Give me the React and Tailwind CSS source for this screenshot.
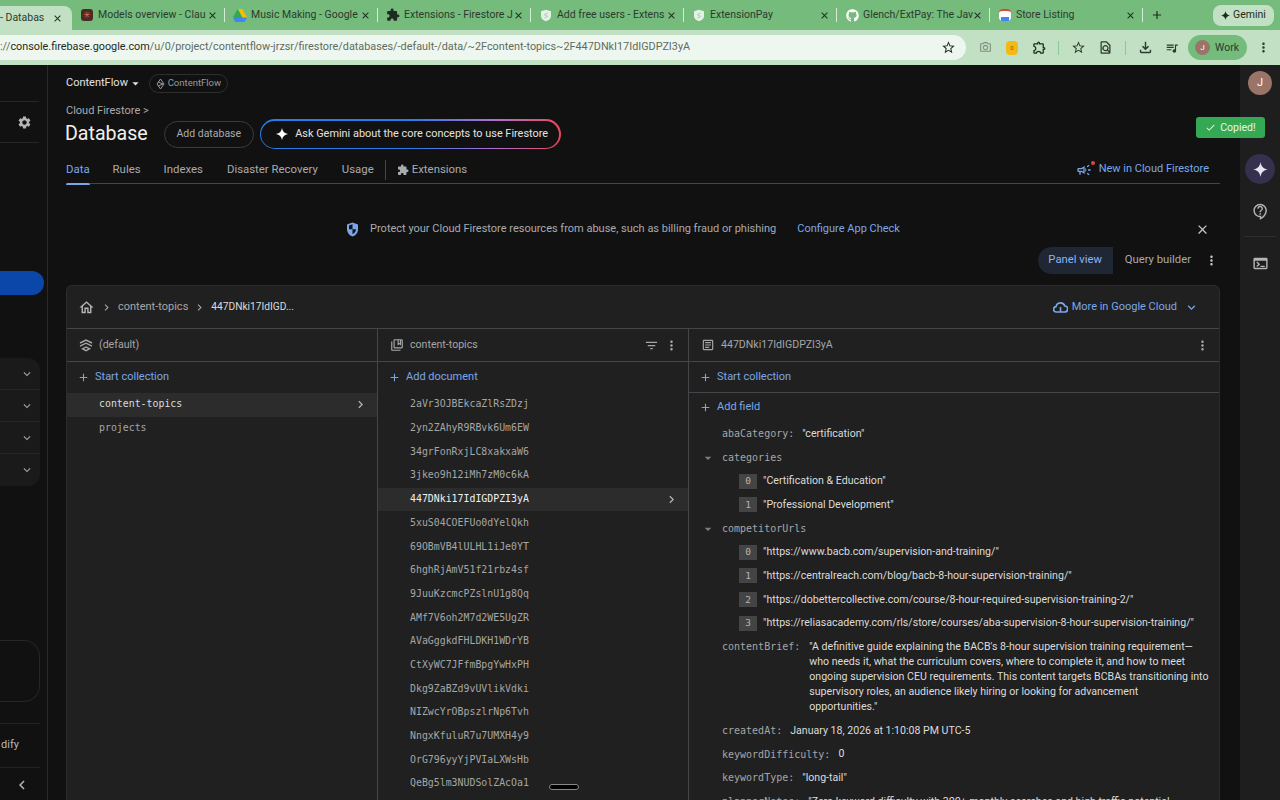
import React from "react";
import {
  MdOutlineHome, MdChevronRight, MdAdd, MdFilterList, MdMoreVert, MdOutlineArticle, MdSettings, MdClose,
  MdExtension, MdOutlineExtension, MdStarBorder, MdOutlineCollectionsBookmark, MdExpandMore, MdChevronLeft, MdCheck,
  MdOutlineFileDownload, MdOutlineCameraAlt, MdOutlineTerminal, MdArrowDropDown, MdOutlineCampaign,
  MdOutlineContactSupport, MdOutlineFindInPage, MdQueueMusic,
} from "react-icons/md";
import { FaGithub } from "react-icons/fa";

const ui = { fontFamily: "Roboto, sans-serif" };
const mono = { fontFamily: "'DejaVu Sans Mono', monospace" };

const Spark = ({ size = 12, className = "" }) => (
  <svg width={size} height={size} viewBox="0 0 24 24" className={className} fill="currentColor">
    <path d="M12 0c1 7 5 11 12 12-7 1-11 5-12 12-1-7-5-11-12-12 7-1 11-5 12-12z" />
  </svg>
);

const DriveIcon = () => (
  <svg width="14" height="13" viewBox="0 0 24 22">
    <path d="M8 0h8l8 14h-8z" fill="#fbbc04" />
    <path d="M8 0l8 14-4 7-12-7z" fill="#34a853" />
    <path d="M0 15h24l-4 7H4z" fill="#4285f4" />
  </svg>
);

const ExtPayIcon = () => (
  <svg width="10" height="13" viewBox="0 0 12 14">
    <path d="M6 0l6 2v6c0 3-3 5-6 6-3-1-6-3-6-6V2z" fill="#e4f1e5" />
    <path d="M8 4L4 6l4 2-4 2" fill="none" stroke="#9cc9a2" strokeWidth="1" />
  </svg>
);

const ShieldIcon = () => (
  <svg width="13" height="15" viewBox="0 0 13 15">
    <path d="M6.5.5l5.5 2v5c0 3.4-2.4 5.8-5.5 7C3.4 13.300 1 10.900 1 7.500v-5z" fill="#7aa7e8" />
    <path d="M6.500 2.300L3 3.600v3.700h3.500zM6.500 7.300V12.300c2-1 3.500-2.700 3.500-5z" fill="#111" />
  </svg>
);

const CloudIcon = () => (
  <svg width="15" height="12" viewBox="0 0 15 12" fill="none" stroke="currentColor" strokeWidth="1.600">
    <path d="M4 11H3.500a2.700 2.700 0 0 1-.4-5.400 4.500 4.500 0 0 1 8.700-.6A3 3 0 0 1 11.500 11z" />
    <path d="M7.500 6v5" />
  </svg>
);

const tabs = [
  { title: "Models overview - Clau", icon: <span className="w-3 h-3 rounded-[3px] bg-[#4a2a22] flex items-center justify-center text-[#e0694a] text-[9px] leading-none">✳</span> },
  { title: "Music Making - Google", icon: <DriveIcon /> },
  { title: "Extensions - Firestore J", icon: <MdExtension size={14} className="text-[#1f2a20]" /> },
  { title: "Add free users - Extens", icon: <ExtPayIcon /> },
  { title: "ExtensionPay", icon: <ExtPayIcon /> },
  { title: "Glench/ExtPay: The Jav", icon: <FaGithub size={13} className="text-white" /> },
  { title: "Store Listing", icon: <span className="w-3 h-3 rounded-sm bg-white border-t-2 border-[#ea4335] flex items-end justify-center"><span className="w-2 h-1 bg-[#4285f4]" /></span> },
];

const Tab = ({ title, icon }) => (
  <div className="w-[153px] h-[30px] shrink-0 flex items-center pl-[8px] relative">
    <span className="w-[14px] flex justify-center shrink-0">{icon}</span>
    <span className="ml-[4px] w-[98px] whitespace-nowrap text-[10.5px] text-[#2c3a2e]">{title}</span>
    <MdClose size={11} className="ml-[11px] text-[#1f2a20]" />
    <span className="absolute left-[152px] top-[8px] w-px h-[14px] bg-[#d6ead8]" />
  </div>
);

const TabStrip = () => (
  <div className="h-[30px] bg-[#74bb7c] flex items-center shrink-0 relative" style={ui}>
    <div className="w-[72px] h-[24px] mt-[6px] rounded-tr-lg bg-[#c2e0c4] flex items-center shrink-0">
      <span className="w-[46px] whitespace-nowrap text-[10.5px] text-[#2c3a2e]">- Databas</span>
      <MdClose size={11} className="ml-[6px] text-[#1f2a20]" />
    </div>
    {tabs.map((t) => <Tab key={t.title} {...t} />)}
    <MdAdd size={14} className="ml-[7px] text-[#1f2a20]" />
    <div className="ml-auto mr-[6px] w-[61px] h-[21px] rounded-lg bg-[#c2e0c4] flex items-center justify-center gap-[3px] text-[10.5px] text-[#1f2a20]">
      <Spark size={9} /> Gemini
    </div>
  </div>
);

const Toolbar = () => (
  <div className="h-[35px] bg-[#c2e0c4] flex items-center shrink-0 text-[#2c3a2e]" style={ui}>
    <div className="w-[966px] h-[25px] rounded-r-full bg-[#eef7ef] flex items-center shrink-0 text-[10.83px] whitespace-nowrap">
      <span className="text-[#5f6b60]">://</span>
      <span className="text-[#1f2a20]">console.firebase.google.com</span>
      <span className="text-[#5f6b60]">/u/0/project/contentflow-jrzsr/firestore/databases/-default-/data/~2Fcontent-topics~2F447DNkI17IdIGDPZI3yA</span>
      <MdStarBorder size={15} className="ml-auto mr-[10px] text-[#1f2a20]" />
    </div>
    <MdOutlineCameraAlt size={13} className="ml-[13px] text-[#7f8f81]" />
    <span className="ml-[14px] w-[12px] h-[14px] rounded-sm bg-[#f5b914] text-[6px] text-[#7a5a00] flex items-center justify-center">0</span>
    <MdOutlineExtension size={15} className="ml-[14px] text-[#1f2a20]" />
    <span className="ml-[11px] w-px h-[14px] bg-[#8fc495]" />
    <MdStarBorder size={15} className="ml-[12px]" />
    <MdOutlineFindInPage size={15} className="ml-[12px]" />
    <span className="ml-[12px] w-px h-[14px] bg-[#8fc495]" />
    <MdOutlineFileDownload size={17} className="ml-[11px]" />
    <MdQueueMusic size={14} className="ml-[11px]" />
    <div className="ml-[9px] w-[59px] h-[25px] rounded-full bg-[#74bb7c] flex items-center pl-[7px] gap-[5px] text-[10.5px]">
      <span className="w-[15px] h-[15px] rounded-full bg-[#9b7468] text-white text-[8px] flex items-center justify-center">J</span>
      Work
    </div>
    <MdMoreVert size={15} className="ml-[9px]" />
  </div>
);

const Sidebar = () => (
  <div className="w-[48px] shrink-0 border-r border-[#2a2a2a] flex flex-col h-full" style={ui}>
    <div className="h-[36px] shrink-0" />
    <div className="w-[39px] h-[42px] border-y border-[#262626] flex items-center justify-end pr-[7px] shrink-0">
      <MdSettings size={15} className="text-[#b5b5b5]" />
    </div>
    <div className="w-[44px] h-[24px] mt-[128px] rounded-r-full bg-[#0b47a8] shrink-0" />
    <div className="w-[40px] mt-[63px] rounded-r-xl bg-[#1a1a1a] shrink-0 divide-y divide-[#262626]">
      {[0, 1, 2, 3].map((i) => (
        <div key={i} className="h-[32px] flex items-center justify-end pr-[6px]">
          <MdExpandMore size={14} className="text-[#a0a0a0]" />
        </div>
      ))}
    </div>
    <div className="w-[40px] h-[62px] mt-[154px] rounded-r-2xl border border-l-0 border-[#262626] shrink-0" />
    <div className="w-[40px] h-[45px] mt-[21px] border-y border-[#222] flex items-center justify-end pr-[21px] text-[11px] text-[#b8b8b8] shrink-0">
      <span>dify</span>
    </div>
    <div className="w-[40px] flex justify-end pr-[9px] mt-[8px] shrink-0">
      <MdChevronLeft size={18} className="text-[#b5b5b5]" />
    </div>
  </div>
);

const PageTabs = () => (
  <div className="h-[30px] mt-[4px] pt-[2px] flex items-center border-b border-[#44464a] text-[11.4px] text-[#a9abae] relative shrink-0">
    <div className="h-[28px] relative flex items-center text-[#7aa7e8]">
      Data
      <span className="absolute left-0 right-0 bottom-[-1px] h-[2px] rounded-t bg-[#7aa7e8]" />
    </div>
    <span className="ml-[23px]">Rules</span>
    <span className="ml-[23px]">Indexes</span>
    <span className="ml-[24px]">Disaster Recovery</span>
    <span className="ml-[24px]">Usage</span>
    <span className="ml-[11px] w-px h-[20px] bg-[#44464a]" />
    <MdExtension size={12} className="ml-[11px] text-[#a9abae]" />
    <span className="ml-[3px]">Extensions</span>
    <div className="ml-auto mr-[11px] flex items-center text-[11px] text-[#7aa7e8]">
      <span className="relative mr-[7px] flex">
        <MdOutlineCampaign size={16} />
        <span className="absolute right-[-3px] top-[-1px] w-[4px] h-[4px] rounded-full bg-[#ea4335]" />
      </span>
      New in Cloud Firestore
    </div>
  </div>
);

const collections = ["content-topics", "projects"];

const docs = [
  "2aVr3OJBEkcaZlRsZDzj", "2yn2ZAhyR9RBvk6Um6EW", "34grFonRxjLC8xakxaW6", "3jkeo9h12iMh7zM0c6kA",
  "447DNki17IdIGDPZI3yA", "5xuS04COEFUo0dYelQkh", "69OBmVB4lULHL1iJe0YT", "6hghRjAmV51f21rbz4sf",
  "9JuuKzcmcPZslnU1g8Qq", "AMf7V6oh2M7d2WE5UgZR", "AVaGggkdFHLDKH1WDrYB", "CtXyWC7JFfmBpgYwHxPH",
  "Dkg9ZaBZd9vUVlikVdki", "NIZwcYrOBpszlrNp6Tvh", "NngxKfuluR7u7UMXH4y9", "OrG796yyYjPVIaLXWsHb",
  "QeBg5lm3NUDSolZAcOa1",
];

const categories = ["Certification & Education", "Professional Development"];
const competitorUrls = [
  "https://www.bacb.com/supervision-and-training/",
  "https://centralreach.com/blog/bacb-8-hour-supervision-training/",
  "https://dobettercollective.com/course/8-hour-required-supervision-training-2/",
  "https://reliasacademy.com/rls/store/courses/aba-supervision-8-hour-supervision-training/",
];

const briefLines = [
  "\"A definitive guide explaining the BACB's 8-hour supervision training requirement—",
  "who needs it, what the curriculum covers, where to complete it, and how to meet",
  "ongoing supervision CEU requirements. This content targets BCBAs transitioning into",
  "supervisory roles, an audience likely hiring or looking for advancement",
  "opportunities.\"",
];

const AddRow = ({ label, className = "" }) => (
  <div className={`flex items-center pl-[10px] text-[11px] text-[#7aa7e8] ${className}`}>
    <MdAdd size={13} />
    <span className="ml-[5px]">{label}</span>
  </div>
);

const FieldKey = ({ children }) => (
  <span className="text-[10px] text-[#a6a6a6] shrink-0" style={mono}>{children}</span>
);

const Field = ({ name, value }) => (
  <div className="h-[23.7px] flex items-center pl-[33px] text-[10.6px] text-[#dcdcdc] whitespace-nowrap">
    <FieldKey>{name}:</FieldKey>
    <span className="ml-[8px]">{value}</span>
  </div>
);

const ArrayField = ({ name, items }) => (
  <>
    <div className="h-[23.7px] flex items-center pl-[33px] relative">
      <MdArrowDropDown size={16} className="absolute left-[11px] text-[#7d7d7d]" />
      <FieldKey>{name}</FieldKey>
    </div>
    {items.map((item, i) => (
      <div key={item} className="h-[23.7px] flex items-center pl-[50px] text-[10.6px] text-[#dcdcdc] whitespace-nowrap">
        <span className="w-[18px] h-[15px] bg-[#444] text-[#b5b5b5] text-[9.5px] flex items-center justify-center" style={mono}>{i}</span>
        <span className="ml-[6px]">"{item}"</span>
      </div>
    ))}
  </>
);

const ColHead = ({ icon, label, children }) => (
  <div className="h-[33px] flex items-center pl-[12px] pr-[9px] border-b border-[#44464a] text-[10.6px] text-[#a6a6a6]">
    {icon}
    <span className="ml-[6px]">{label}</span>
    <span className="ml-auto flex items-center gap-[5px]">{children}</span>
  </div>
);

const DbIcon = () => (
  <svg width="14" height="14" viewBox="0 0 14 14" fill="none" stroke="#a6a6a6" strokeWidth="1.4">
    <path d="M1 5l6-3 6 3M1 8.200l6-3 6 3M3.500 10.800L7 9l3.500 1.800L7 12.600z" />
  </svg>
);

const DataPanel = () => (
  <div className="mt-[11px] flex-1 min-h-0 overflow-hidden rounded-t-md border border-b-0 border-[#2c2c2c] bg-[#202020] relative text-[#a6a6a6]">
    <div className="h-[43px] flex items-center pl-[11px] pr-[20px] border-b border-[#44464a] text-[11px]">
      <MdOutlineHome size={17} className="text-[#b5b5b5]" />
      <MdChevronRight size={13} className="ml-[5px]" />
      <span className="ml-[5px]">content-topics</span>
      <MdChevronRight size={13} className="ml-[5px]" />
      <span className="ml-[5px] text-[10.2px] text-[#dcdcdc]">447DNki17IdIGD...</span>
      <div className="ml-auto flex items-center text-[#7aa7e8]">
        <CloudIcon />
        <span className="ml-[4px]">More in Google Cloud</span>
        <MdExpandMore size={15} className="ml-[7px]" />
      </div>
    </div>
    <div className="flex h-full">
      <div className="w-[311px] shrink-0 border-r border-[#44464a]">
        <ColHead icon={<DbIcon />} label="(default)" />
        <AddRow label="Start collection" className="h-[31px]" />
        {collections.map((c, i) => (
          <div key={c} className={`h-[23.7px] flex items-center pl-[32px] pr-[9px] text-[9.9px] ${i === 0 ? "bg-[#2c2c2c] text-[#dcdcdc]" : ""}`} style={mono}>
            {c}
            {i === 0 && <MdChevronRight size={15} className="ml-auto text-[#b5b5b5]" />}
          </div>
        ))}
      </div>
      <div className="w-[311px] shrink-0 border-r border-[#44464a]">
        <ColHead icon={<MdOutlineCollectionsBookmark size={14} />} label="content-topics">
          <MdFilterList size={15} />
          <MdMoreVert size={15} />
        </ColHead>
        <AddRow label="Add document" className="h-[31px]" />
        {docs.map((d) => {
          const active = d.startsWith("447");
          return (
            <div key={d} className={`h-[23.7px] flex items-center pl-[32px] pr-[9px] text-[9.9px] ${active ? "bg-[#2c2c2c] text-[#f0f0f0]" : ""}`} style={mono}>
              {d}
              {active && <MdChevronRight size={15} className="ml-auto text-[#b5b5b5]" />}
            </div>
          );
        })}
      </div>
      <div className="flex-1 min-w-0">
        <ColHead icon={<MdOutlineArticle size={14} />} label="447DNki17IdIGDPZI3yA">
          <MdMoreVert size={15} />
        </ColHead>
        <AddRow label="Start collection" className="h-[31px] border-b border-[#44464a]" />
        <AddRow label="Add field" className="h-[29px]" />
        <Field name="abaCategory" value={'"certification"'} />
        <ArrayField name="categories" items={categories} />
        <ArrayField name="competitorUrls" items={competitorUrls} />
        <div className="flex pl-[33px] pt-[5px] pb-[4px] text-[10.6px] leading-[14.9px] text-[#dcdcdc]">
          <FieldKey>contentBrief:</FieldKey>
          <div className="ml-[9px] whitespace-nowrap">
            {briefLines.map((line) => <p key={line}>{line}</p>)}
          </div>
        </div>
        <Field name="createdAt" value="January 18, 2026 at 1:10:08 PM UTC-5" />
        <Field name="keywordDifficulty" value="0" />
        <Field name="keywordType" value={'"long-tail"'} />
        <Field name="plannerNotes" value={'"Zero keyword difficulty with 300+ monthly searches and high traffic potential'} />
      </div>
    </div>
    <span className="absolute left-[482px] top-[498px] w-[30px] h-[6px] rounded-full bg-black border border-[#888]" />
  </div>
);

const Main = () => (
  <div className="w-[1192px] shrink-0 h-full pl-[18px] pr-[20px] flex flex-col" style={ui}>
    <div className="h-[19px] mt-[9px] flex items-center shrink-0">
      <span className="text-[11px] text-[#e3e3e3]">ContentFlow</span>
      <MdArrowDropDown size={15} className="text-[#e3e3e3]" />
      <div className="ml-[6px] h-[19px] w-[79px] rounded-full border border-[#2e2e2e] flex items-center justify-center gap-[3px] text-[9.5px] text-[#9a9a9a]">
        <svg width="9" height="12" viewBox="0 0 9 12" fill="none" stroke="#9a9a9a" strokeWidth="1">
          <path d="M4.500 1L1 6l3.500 5L8 6zM2 4l5 2M2 8l5-2" />
        </svg>
        ContentFlow
      </div>
    </div>
    <div className="mt-[10px] h-[16px] flex items-center text-[11px] text-[#a9abae] shrink-0">Cloud Firestore &gt;</div>
    <div className="-mt-[1px] h-[32px] flex items-center shrink-0">
      <h1 className="text-[19.6px] text-[#f0f0f0] -ml-[1px]">Database</h1>
      <button className="ml-[16px] w-[90px] h-[27px] rounded-full border border-[#3c3c3c] text-[10.5px] text-[#a9abae]">Add database</button>
      <div className="ml-[6px] w-[301px] h-[30px] rounded-full p-[1.5px] bg-[linear-gradient(90deg,#2a7be8_0%,#2a7be8_50%,#b070d0_78%,#e8475b_100%)] shrink-0">
        <div className="h-full rounded-full bg-[#111] flex items-center pl-[15px] gap-[7px] text-[10.9px] text-[#e3e3e3]">
          <Spark size={12} className="text-white" />
          Ask Gemini about the core concepts to use Firestore
        </div>
      </div>
    </div>
    <PageTabs />
    <div className="mt-[36px] h-[18px] flex items-center justify-center text-[11px] shrink-0 relative">
      <div className="flex items-center mr-[40px]">
        <ShieldIcon />
        <span className="ml-[11px] text-[#a9abae]">Protect your Cloud Firestore resources from abuse, such as billing fraud or phishing</span>
        <span className="ml-[21px] text-[#7aa7e8]">Configure App Check</span>
      </div>
      <MdClose size={15} className="absolute right-[10px] text-[#c4c4c4]" />
    </div>
    <div className="mt-[9px] flex items-center justify-end text-[11.3px] shrink-0">
      <div className="w-[75px] h-[27px] rounded-l-full bg-[#1e2733] text-[#8ab4f8] flex items-center justify-center">Panel view</div>
      <span className="ml-[12px] text-[#a9abae]">Query builder</span>
      <MdMoreVert size={15} className="ml-[13px] mr-[1px] text-[#c4c4c4]" />
    </div>
    <DataPanel />
  </div>
);

const RightRail = () => (
  <div className="flex-1 h-full bg-[#1e1e1e] flex flex-col items-center" style={ui}>
    <span className="mt-[6px] w-[24px] h-[24px] rounded-full bg-[#9b7468] text-white text-[11px] flex items-center justify-center">J</span>
    <span className="mt-[59px] w-[30px] h-[30px] rounded-full bg-[#35304d] text-[#e6e3f2] flex items-center justify-center">
      <Spark size={15} />
    </span>
    <MdOutlineContactSupport size={17} className="mt-[19px] text-[#b5b5b5]" />
    <span className="mt-[16px] w-[32px] h-px bg-[#2e2e2e]" />
    <MdOutlineTerminal size={17} className="mt-[18px] text-[#b5b5b5]" />
  </div>
);

export default function App() {
  return (
    <div className="h-screen w-[1280px] overflow-hidden flex flex-col bg-[#111]">
      <TabStrip />
      <Toolbar />
      <div className="flex-1 min-h-0 flex relative">
        <Sidebar />
        <Main />
        <RightRail />
        <div className="absolute left-[1196px] top-[52px] w-[69px] h-[21px] rounded-[3px] bg-[#34a853] text-[#eaf6ec] text-[10.5px] flex items-center justify-center gap-[4px]" style={ui}>
          <MdCheck size={11} /> Copied!
        </div>
      </div>
    </div>
  );
}
